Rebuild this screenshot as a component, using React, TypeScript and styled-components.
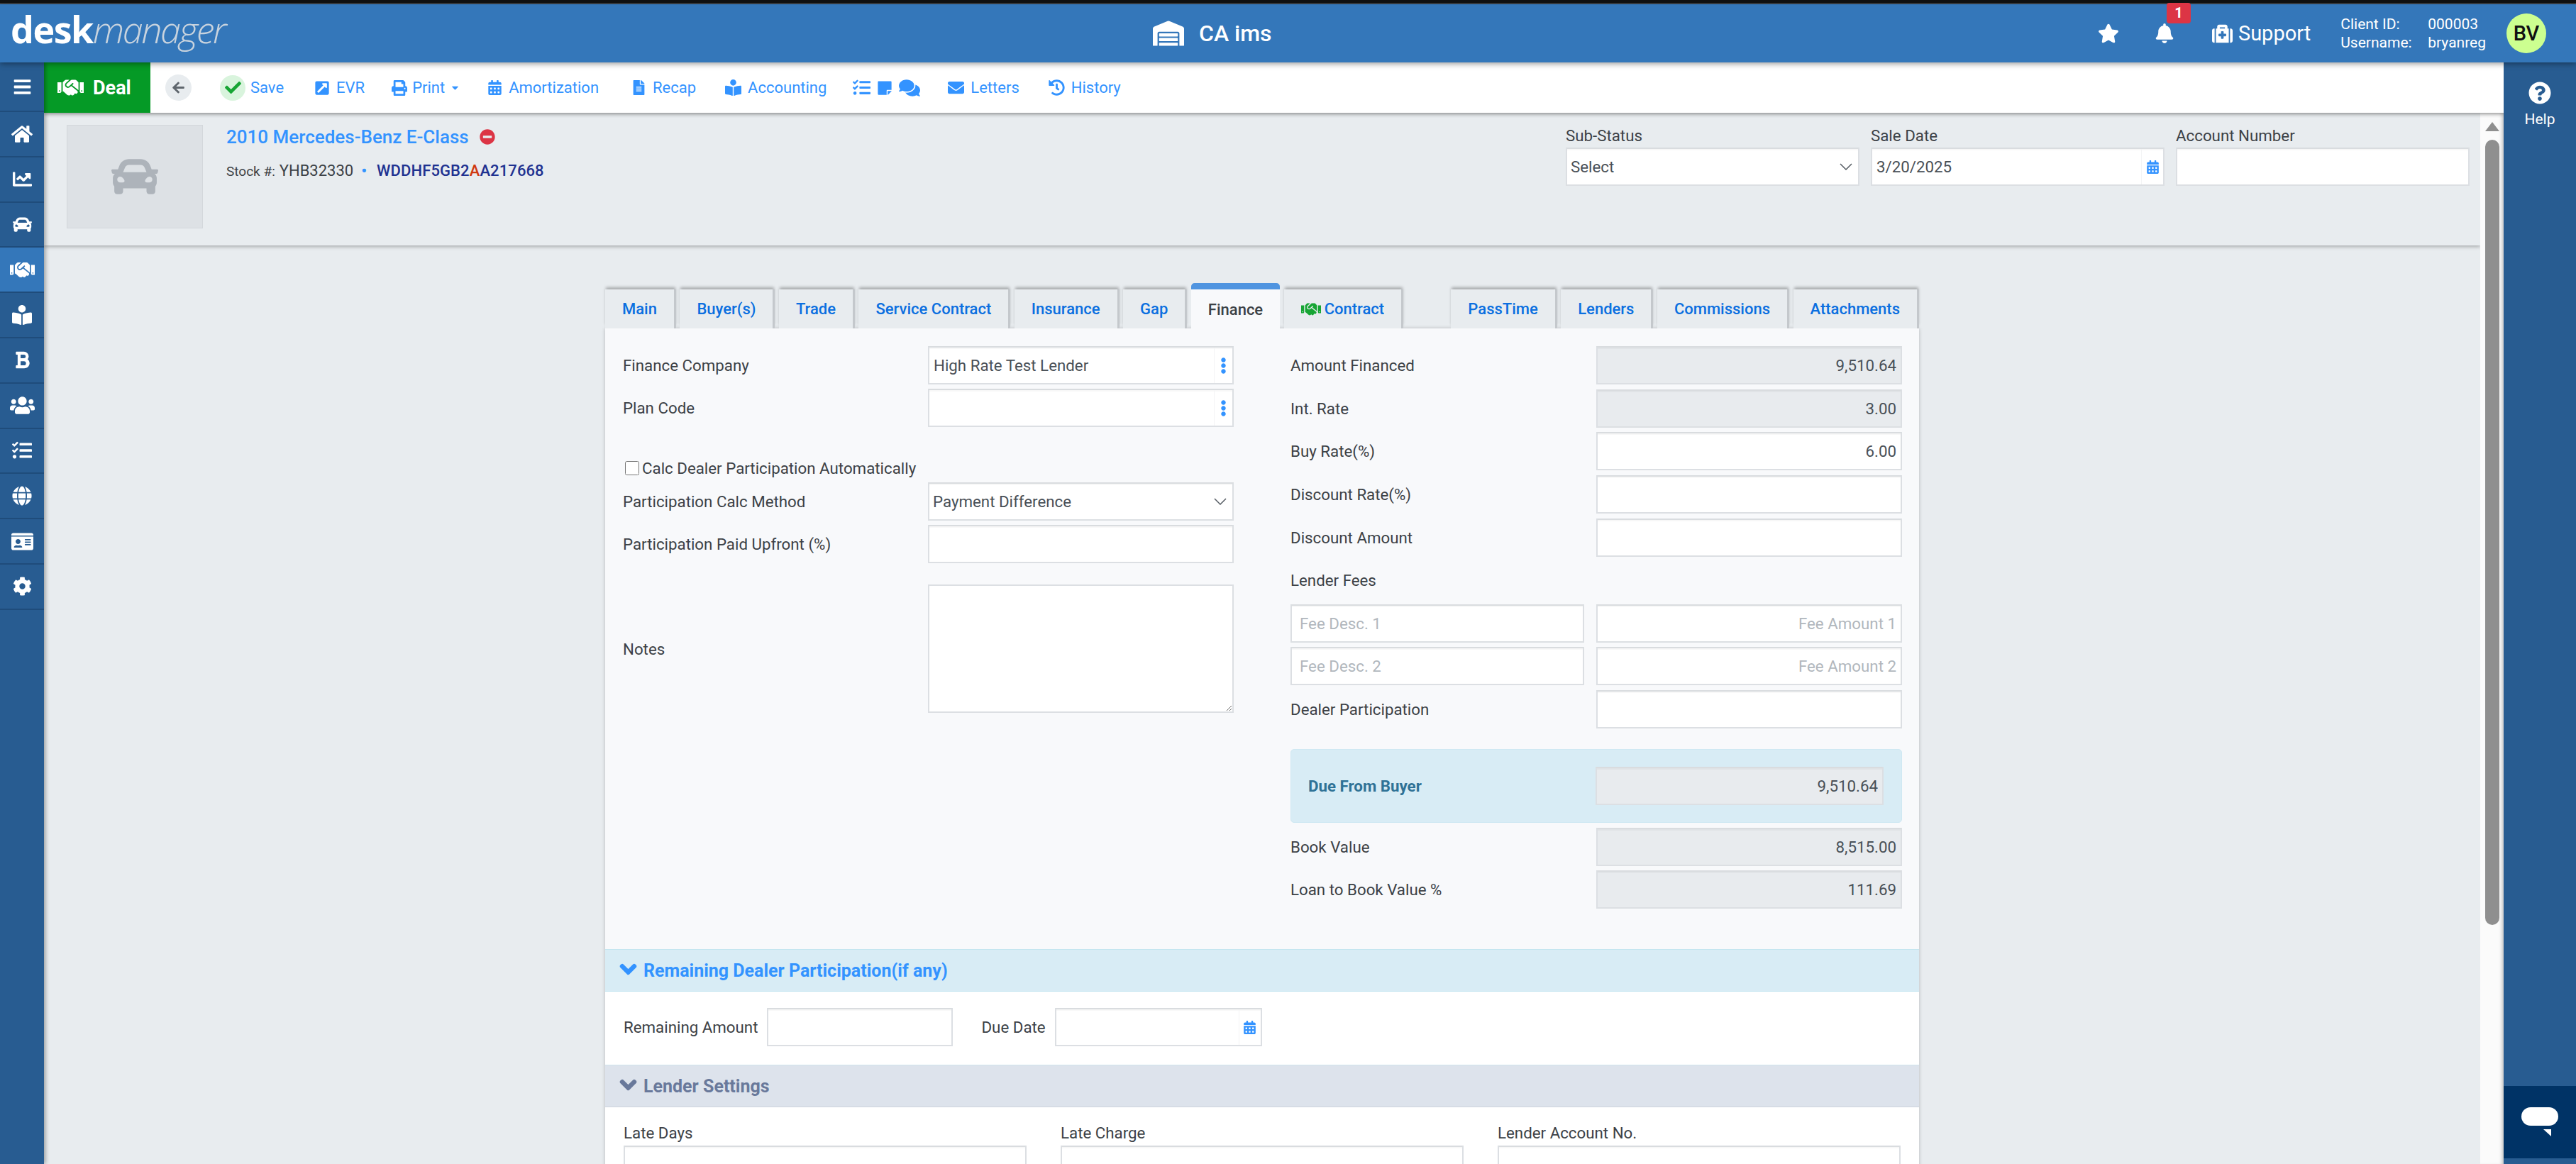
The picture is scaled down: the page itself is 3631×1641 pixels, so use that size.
import React from 'react';
import styled, { createGlobalStyle } from 'styled-components';
import {
	FaArrowLeft, FaBars, FaBell, FaBold, FaBookReader, FaCalendarAlt, FaCar, FaCaretDown, FaChartLine, FaCheck,
	FaChevronDown, FaCog, FaComments, FaEllipsisV, FaEnvelope, FaExternalLinkSquareAlt, FaFileAlt, FaGlobe,
	FaHandshake, FaHistory, FaHome, FaIdCard, FaMedkit, FaMinusCircle, FaPrint, FaQuestionCircle, FaStar,
	FaStickyNote, FaTasks, FaUsers, FaWarehouse,
} from 'react-icons/fa';

const GlobalStyle = createGlobalStyle`
	html, body {
		margin: 0;
		padding: 0;
		height: 100%;
		overflow: hidden;
		background: #e8ecef;
		font-family: Roboto, 'Liberation Sans', sans-serif;
		font-size: 22.3px;
		color: #3c4146;
	}
	* {
		box-sizing: border-box;
	}
`;

const Page = styled.div`
	width: 3631px;
	height: 1641px;
	display: flex;
	flex-direction: column;
	overflow: hidden;
`;

const TopEdge = styled.div`
	height: 6px;
	flex: none;
	background: #101112;
	border-bottom: 2px solid #3a3f45;
`;

const Header = styled.header`
	height: 82px;
	flex: none;
	position: relative;
	z-index: 3;
	background: #3477ba;
	color: #fff;
	display: flex;
	align-items: center;
	box-shadow: 0 2px 8px rgba(0, 0, 0, 0.4);
`;

const Logo = styled.div`
	width: 1625px;
	flex: none;
	padding-left: 15px;
	padding-bottom: 12px;
	font-family: 'Open Sans', sans-serif;
	font-size: 52px;
	line-height: 60px;
	letter-spacing: -1.5px;
	font-weight: 700;
	color: #fff;

	em {
		font-weight: 300;
		color: #c8d3de;
		letter-spacing: -2.4px;
	}
`;

const Dealer = styled.div`
	display: flex;
	align-items: center;
	gap: 21px;
	font-size: 32px;
	font-weight: 500;
`;

const HeaderRight = styled.div`
	flex: 1;
	display: flex;
	align-items: center;
	justify-content: flex-end;
	padding-right: 42px;
`;

const HeaderIcon = styled.div`
	display: flex;
	position: relative;
	margin-right: 50px;
`;

const Badge = styled.span`
	position: absolute;
	top: -29px;
	left: 17px;
	width: 34px;
	height: 29px;
	background: #dc3545;
	border-radius: 4px;
	font-size: 20px;
	font-weight: 700;
	text-align: center;
	line-height: 29px;
`;

const Support = styled.div`
	display: flex;
	align-items: center;
	gap: 8px;
	font-size: 29px;
	margin-right: 42px;
	margin-left: 3px;
`;

const ClientInfo = styled.div`
	display: grid;
	grid-template-columns: 123px auto;
	row-gap: 1px;
	font-size: 21px;
	line-height: 25px;
	margin-right: 29px;
`;

const Avatar = styled.div`
	width: 56px;
	height: 56px;
	border-radius: 50%;
	background: #ccff90;
	color: #111;
	font-size: 29px;
	font-weight: 500;
	display: flex;
	align-items: center;
	justify-content: center;
`;

const Body = styled.div`
	flex: 1;
	display: flex;
	min-height: 0;
`;

const Sidebar = styled.nav`
	width: 62px;
	flex: none;
	position: relative;
	z-index: 2;
	background: #285c91;
	box-shadow: 2px 0 6px rgba(0, 0, 0, 0.35);
`;

const NavItem = styled.div<{ $active?: boolean; $tall?: boolean }>`
	height: ${(p) => (p.$tall ? '70px' : '63.8px')};
	display: flex;
	align-items: center;
	justify-content: center;
	color: #fff;
	background: ${(p) => (p.$active ? '#3477ba' : 'transparent')};
	border-bottom: 2px solid #1f4c7b;
`;

const Main = styled.div`
	flex: 1;
	min-width: 0;
	display: flex;
	flex-direction: column;
`;

const Toolbar = styled.div`
	height: 71px;
	flex: none;
	position: relative;
	z-index: 1;
	background: #fff;
	display: flex;
	align-items: center;
	box-shadow: 0 2px 5px rgba(0, 0, 0, 0.4);
`;

const DealBadge = styled.div`
	width: 150px;
	height: 100%;
	background: #059a26;
	color: #fff;
	font-size: 27px;
	font-weight: 700;
	display: flex;
	align-items: center;
	gap: 13px;
	padding-left: 19px;
`;

const BackButton = styled.div`
	width: 37px;
	height: 37px;
	border-radius: 50%;
	margin-left: 21px;
	background: #e8ecef;
	color: #5f666d;
	display: flex;
	align-items: center;
	justify-content: center;
`;

const ToolItem = styled.div<{ $gap?: number; $left: number }>`
	display: flex;
	align-items: center;
	gap: ${(p) => p.$gap ?? 9}px;
	margin-left: ${(p) => p.$left}px;
	color: #3393ff;
	font-size: 22px;
	white-space: nowrap;
`;

const SaveCircle = styled.span`
	width: 36px;
	height: 36px;
	border-radius: 50%;
	background: #d9f4dd;
	color: #17a534;
	display: flex;
	align-items: center;
	justify-content: center;
`;

const Content = styled.div`
	flex: 1;
	min-height: 0;
	display: flex;
`;

const Scroller = styled.div`
	flex: 1;
	min-width: 0;
	overflow: hidden;
`;

const SubHeader = styled.section`
	height: 187px;
	display: flex;
	padding: 17px 15px 0 32px;
	box-shadow: 0 2px 5px rgba(0, 0, 0, 0.28);
`;

const PhotoBox = styled.div`
	width: 192px;
	height: 146px;
	background: #dde1e5;
	border: 1px solid #d3d7db;
	color: #adb3ba;
	display: flex;
	align-items: center;
	justify-content: center;
`;

const VehicleInfo = styled.div`
	margin-left: 33px;
	flex: 1;
`;

const VehicleTitle = styled.div`
	display: flex;
	align-items: center;
	gap: 15px;
	height: 34px;
	color: #3393ff;
	font-size: 26px;
	font-weight: 500;

	svg {
		color: #dc3545;
	}
`;

const StockLine = styled.div`
	display: flex;
	align-items: baseline;
	margin-top: 18px;
	font-size: 22px;
	color: #3c4146;

	small {
		font-size: 19px;
		margin-right: 6px;
	}
`;

const Dot = styled.span`
	color: #3393ff;
	margin: 0 14px 0 11px;
	font-weight: 700;
`;

const Vin = styled.span`
	font-weight: 500;
	letter-spacing: 0.1px;
	color: #1f3291;

	b {
		font-weight: 500;
		color: #d03a10;
	}
`;

const HeadFields = styled.div`
	display: flex;
	gap: 16px;
`;

const HeadField = styled.div`
	width: 414px;

	label {
		display: block;
		height: 32px;
		line-height: 30px;
	}
`;

const FieldShell = styled.div<{ $height?: number; $grey?: boolean; $width?: number }>`
	height: ${(p) => p.$height ?? 54}px;
	width: ${(p) => (p.$width ? `${p.$width}px` : '100%')};
	flex: none;
	display: flex;
	align-items: stretch;
	background: ${(p) => (p.$grey ? '#e8ebee' : '#fff')};
	border: 2px solid #dcdfe3;
	border-top-color: #d9dcdf;
	box-shadow: inset 0 2px 1px rgba(0, 0, 0, 0.03);
	color: #495057;
`;

const TextInput = styled.input<{ $right?: boolean; $pad?: number }>`
	flex: 1;
	min-width: 0;
	border: 0;
	outline: 0;
	background: transparent;
	font: inherit;
	color: #495057;
	padding: 0 ${(p) => (p.$right ? 6 : p.$pad ?? 6)}px;
	text-align: ${(p) => (p.$right ? 'right' : 'left')};

	&::placeholder {
		color: #b1b7bd;
		opacity: 1;
	}
`;

const SelectBox = styled.select`
	flex: 1;
	min-width: 0;
	border: 0;
	outline: 0;
	background: transparent;
	appearance: none;
	font: inherit;
	color: #495057;
	padding: 0 5px;
`;

const Chevron = styled.svg`
	width: 18px;
	height: 10px;
	align-self: center;
	margin-right: 8px;
	fill: none;
	stroke: #555c63;
	stroke-width: 1.5;
`;

const Addon = styled.span<{ $narrow?: boolean }>`
	width: ${(p) => (p.$narrow ? 26 : 31)}px;
	flex: none;
	display: flex;
	align-items: center;
	justify-content: center;
	color: #3393ff;
	border-left: 1px solid #f3f4f5;
`;

const PanelWrap = styled.div`
	width: 1852px;
	margin: 53px auto 0;
`;

const TabsBar = styled.div`
	height: 64px;
	display: flex;
	align-items: flex-end;
	gap: 5.5px;
`;

const Tab = styled.div<{ $active?: boolean; $pushed?: boolean }>`
	height: ${(p) => (p.$active ? 64 : 55)}px;
	padding: ${(p) => (p.$active ? '1px' : '0')} 24px 0;
	margin-left: ${(p) => (p.$pushed ? 'auto' : '0')};
	display: flex;
	align-items: center;
	gap: 5px;
	font-weight: 500;
	font-size: 22px;
	white-space: nowrap;
	color: ${(p) => (p.$active ? '#3c4146' : '#0b6fe0')};
	background: ${(p) => (p.$active ? '#f8f9fb' : '#e8ecef')};
	border-top: ${(p) => (p.$active ? '9px solid #4f94e0' : '0')};
	border-right: ${(p) => (p.$active ? '0' : '3px solid #c4c8cc')};
	border-radius: ${(p) => (p.$active ? '5px 5px 0 0' : '0')};
	box-shadow: ${(p) => (p.$active ? 'none' : '0 -4px 4px -1px rgba(0, 0, 0, 0.28)')};

	svg {
		color: #17a534;
	}
`;

const Panel = styled.div`
	background: #fff;
	box-shadow: 0 0 5px rgba(0, 0, 0, 0.22);
`;

const FinanceBody = styled.div`
	height: 875px;
	background: #f8f9fb;
	padding: 25px 24px 0 25px;
	display: grid;
	grid-template-columns: 861px 862px;
	column-gap: 80px;
`;

const Column = styled.div`
	display: flex;
	flex-direction: column;
`;

const Row = styled.div<{ $below?: number }>`
	display: flex;
	align-items: center;
	justify-content: space-between;
	margin-bottom: ${(p) => p.$below ?? 6.7}px;
	min-height: 54px;
`;

const RowField = styled.div`
	width: 431px;
	flex: none;
`;

const CheckRow = styled.label`
	display: flex;
	align-items: center;
	gap: 4px;
	height: 38px;
	margin-bottom: 1px;

	input {
		width: 20px;
		height: 20px;
		margin: 0 0 0 3px;
	}
`;

const NotesArea = styled.textarea`
	width: 431px;
	height: 181px;
	flex: none;
	background: #fff;
	border: 2px solid #dcdfe3;
	outline: 0;
	resize: both;
	font: inherit;
`;

const PlainLabel = styled.div`
	height: 26px;
	line-height: 26px;
	margin: 20px 0 21px;
`;

const FeeRow = styled.div`
	display: flex;
	justify-content: space-between;
	margin-bottom: 6.5px;
`;

const DueBox = styled.div`
	height: 104px;
	margin: 29px 0 7px;
	padding-left: 24px;
	padding-right: 25px;
	background: #d8ecf5;
	border: 1px solid #cfe8f3;
	border-radius: 5px;
	display: flex;
	align-items: center;
	justify-content: space-between;
	color: #2f7296;
	font-weight: 700;

	> div {
		width: 406px;
		margin-right: 0;
		font-weight: 400;
	}
`;

const SectionBar = styled.div<{ $muted?: boolean }>`
	height: 60px;
	display: flex;
	align-items: center;
	gap: 9px;
	padding-left: 20px;
	font-size: 25px;
	font-weight: 700;
	color: ${(p) => (p.$muted ? '#69799b' : '#3393ff')};
	background: ${(p) => (p.$muted ? '#dde3ec' : '#d8ecf5')};
	border-top: 1px solid ${(p) => (p.$muted ? '#cfe3ec' : '#c3e5f0')};
	border-bottom: 1px solid ${(p) => (p.$muted ? '#ccd3dd' : '#c3e5f0')};

	svg {
		stroke: currentColor;
		stroke-width: 50;
		margin-top: -4px;
	}
`;

const RemainingRow = styled.div`
	height: 103px;
	display: flex;
	align-items: center;
	padding: 0 0 3px 26px;
	background: #fff;
`;

const InlineLabel = styled.span<{ $left?: number }>`
	margin-left: ${(p) => p.$left ?? 0}px;
	margin-right: 13px;
`;

const LenderGrid = styled.div`
	display: grid;
	grid-template-columns: repeat(3, 568px);
	column-gap: 48px;
	padding: 22px 25px 0 26px;
	background: #fff;

	label {
		display: block;
		height: 32px;
		line-height: 28px;
	}
`;

const ScrollTrack = styled.div`
	width: 33px;
	flex: none;
	background: #fbfbfb;
	display: flex;
	flex-direction: column;
	align-items: center;
	padding-top: 13px;
	padding-left: 1px;
	box-shadow: inset -5px 0 5px -3px rgba(0, 0, 0, 0.25);
`;

const ScrollArrow = styled.div`
	width: 0;
	height: 0;
	border-left: 10px solid transparent;
	border-right: 10px solid transparent;
	border-bottom: 13px solid #8f8f8f;
`;

const ScrollThumb = styled.div`
	width: 20px;
	height: 1107px;
	margin-top: 12px;
	border-radius: 10px;
	background: #8f8f8f;
`;

const HelpBar = styled.aside`
	width: 102px;
	flex: none;
	background: #285c91;
	display: flex;
	flex-direction: column;
	align-items: center;
	color: #fff;
	position: relative;
	z-index: 2;
`;

const HelpItem = styled.div`
	margin-top: 27px;
	display: flex;
	flex-direction: column;
	align-items: center;
	gap: 8px;
	font-size: 21px;
	line-height: 26px;
	flex: 1;
`;

const ChatButton = styled.div`
	width: 100%;
	height: 102px;
	margin-bottom: 8px;
	background: #003366;
	display: flex;
	align-items: center;
	justify-content: center;
`;

const tabs = ['Main', 'Buyer(s)', 'Trade', 'Service Contract', 'Insurance', 'Gap'];
const rightTabs = ['PassTime', 'Lenders', 'Commissions', 'Attachments'];

const Calendar = () => (
	<Addon>
		<FaCalendarAlt size={19} />
	</Addon>
);

const Field = (props: { value?: string; right?: boolean; grey?: boolean; placeholder?: string; pad?: number; width?: number }) => (
	<FieldShell $grey={props.grey} $width={props.width}>
		<TextInput readOnly value={props.value} placeholder={props.placeholder} $right={props.right} $pad={props.pad} />
	</FieldShell>
);

const ChevronIcon = () => (
	<Chevron viewBox='0 0 18 10'>
		<path d='M1 1l8 8 8-8' />
	</Chevron>
);

const App = () => {
	return (
		<Page>
			<GlobalStyle />
			<TopEdge />
			<Header>
				<Logo>
					desk<em>manager</em>
				</Logo>
				<Dealer>
					<FaWarehouse size={44} />
					CA ims
				</Dealer>
				<HeaderRight>
					<HeaderIcon>
						<FaStar size={30} />
					</HeaderIcon>
					<HeaderIcon>
						<FaBell size={28} />
						<Badge>1</Badge>
					</HeaderIcon>
					<Support>
						<FaMedkit size={29} />
						Support
					</Support>
					<ClientInfo>
						<span>Client ID:</span>
						<span>000003</span>
						<span>Username:</span>
						<span>bryanreg</span>
					</ClientInfo>
					<Avatar>BV</Avatar>
				</HeaderRight>
			</Header>
			<Body>
				<Sidebar>
					<NavItem $tall>
						<FaBars size={27} />
					</NavItem>
					<NavItem>
						<FaHome size={30} />
					</NavItem>
					<NavItem>
						<FaChartLine size={27} />
					</NavItem>
					<NavItem>
						<FaCar size={27} />
					</NavItem>
					<NavItem $active>
						<FaHandshake size={35} />
					</NavItem>
					<NavItem>
						<FaBookReader size={28} />
					</NavItem>
					<NavItem>
						<FaBold size={27} />
					</NavItem>
					<NavItem>
						<FaUsers size={35} />
					</NavItem>
					<NavItem>
						<FaTasks size={28} />
					</NavItem>
					<NavItem>
						<FaGlobe size={28} />
					</NavItem>
					<NavItem>
						<FaIdCard size={31} />
					</NavItem>
					<NavItem>
						<FaCog size={27} />
					</NavItem>
				</Sidebar>
				<Main>
					<Toolbar>
						<DealBadge>
							<FaHandshake size={37} />
							Deal
						</DealBadge>
						<BackButton>
							<FaArrowLeft size={19} />
						</BackButton>
						<ToolItem $left={40} $gap={7}>
							<SaveCircle>
								<FaCheck size={23} />
							</SaveCircle>
							Save
						</ToolItem>
						<ToolItem $left={43}>
							<FaExternalLinkSquareAlt size={22} />
							EVR
						</ToolItem>
						<ToolItem $left={38} $gap={7}>
							<FaPrint size={22} />
							Print
							<FaCaretDown size={15} />
						</ToolItem>
						<ToolItem $left={38}>
							<FaCalendarAlt size={21} />
							Amortization
						</ToolItem>
						<ToolItem $left={46}>
							<FaFileAlt size={21} />
							Recap
						</ToolItem>
						<ToolItem $left={41}>
							<FaBookReader size={23} />
							Accounting
						</ToolItem>
						<ToolItem $left={37}>
							<FaTasks size={25} />
							<FaStickyNote size={22} />
							<FaComments size={30} />
						</ToolItem>
						<ToolItem $left={39}>
							<FaEnvelope size={23} />
							Letters
						</ToolItem>
						<ToolItem $left={41}>
							<FaHistory size={23} />
							History
						</ToolItem>
					</Toolbar>
					<Content>
						<Scroller>
							<SubHeader>
								<PhotoBox>
									<FaCar size={66} />
								</PhotoBox>
								<VehicleInfo>
									<VehicleTitle>
										2010 Mercedes-Benz E-Class
										<FaMinusCircle size={22} />
									</VehicleTitle>
									<StockLine>
										<small>Stock #:</small>
										YHB32330
										<Dot>•</Dot>
										<Vin>
											WDDHF5GB2<b>A</b>A217668
										</Vin>
									</StockLine>
								</VehicleInfo>
								<HeadFields>
									<HeadField>
										<label>Sub-Status</label>
										<FieldShell>
											<SelectBox defaultValue='Select'>
												<option>Select</option>
											</SelectBox>
											<ChevronIcon />
										</FieldShell>
									</HeadField>
									<HeadField>
										<label>Sale Date</label>
										<FieldShell>
											<TextInput readOnly value='3/20/2025' />
											<Calendar />
										</FieldShell>
									</HeadField>
									<HeadField>
										<label>Account Number</label>
										<Field />
									</HeadField>
								</HeadFields>
							</SubHeader>
							<PanelWrap>
								<TabsBar>
									{tabs.map((tab) => (
										<Tab key={tab}>{tab}</Tab>
									))}
									<Tab $active>Finance</Tab>
									<Tab>
										<FaHandshake size={28} />
										Contract
									</Tab>
									{rightTabs.map((tab, i) => (
										<Tab key={tab} $pushed={i === 0}>
											{tab}
										</Tab>
									))}
								</TabsBar>
								<Panel>
									<FinanceBody>
										<Column>
											<Row $below={6}>
												Finance Company
												<RowField>
													<FieldShell>
														<TextInput readOnly value='High Rate Test Lender' />
														<Addon $narrow>
															<FaEllipsisV size={23} />
														</Addon>
													</FieldShell>
												</RowField>
											</Row>
											<Row $below={39}>
												Plan Code
												<RowField>
													<FieldShell>
														<TextInput readOnly />
														<Addon $narrow>
															<FaEllipsisV size={23} />
														</Addon>
													</FieldShell>
												</RowField>
											</Row>
											<CheckRow>
												<input type='checkbox' />
												Calc Dealer Participation Automatically
											</CheckRow>
											<Row $below={6}>
												Participation Calc Method
												<RowField>
													<FieldShell>
														<SelectBox defaultValue='Payment Difference'>
															<option>Payment Difference</option>
														</SelectBox>
														<ChevronIcon />
													</FieldShell>
												</RowField>
											</Row>
											<Row $below={30}>
												Participation Paid Upfront (%)
												<RowField>
													<Field />
												</RowField>
											</Row>
											<Row>
												Notes
												<NotesArea />
											</Row>
										</Column>
										<Column>
											<Row>
												Amount Financed
												<RowField>
													<Field grey right value='9,510.64' />
												</RowField>
											</Row>
											<Row>
												Int. Rate
												<RowField>
													<Field grey right value='3.00' />
												</RowField>
											</Row>
											<Row>
												Buy Rate(%)
												<RowField>
													<Field right value='6.00' />
												</RowField>
											</Row>
											<Row>
												Discount Rate(%)
												<RowField>
													<Field />
												</RowField>
											</Row>
											<Row $below={0}>
												Discount Amount
												<RowField>
													<Field />
												</RowField>
											</Row>
											<PlainLabel>Lender Fees</PlainLabel>
											<FeeRow>
												<Field width={414} placeholder='Fee Desc. 1' pad={11} />
												<RowField>
													<Field right placeholder='Fee Amount 1' />
												</RowField>
											</FeeRow>
											<FeeRow>
												<Field width={414} placeholder='Fee Desc. 2' pad={11} />
												<RowField>
													<Field right placeholder='Fee Amount 2' />
												</RowField>
											</FeeRow>
											<Row $below={0}>
												Dealer Participation
												<RowField>
													<Field />
												</RowField>
											</Row>
											<DueBox>
												Due From Buyer
												<div>
													<Field grey right value='9,510.64' />
												</div>
											</DueBox>
											<Row>
												Book Value
												<RowField>
													<Field grey right value='8,515.00' />
												</RowField>
											</Row>
											<Row>
												Loan to Book Value %
												<RowField>
													<Field grey right value='111.69' />
												</RowField>
											</Row>
										</Column>
									</FinanceBody>
									<SectionBar>
										<FaChevronDown size={25} />
										Remaining Dealer Participation(if any)
									</SectionBar>
									<RemainingRow>
										<InlineLabel>Remaining Amount</InlineLabel>
										<Field width={262} />
										<InlineLabel $left={40}>Due Date</InlineLabel>
										<FieldShell $width={292}>
											<TextInput readOnly />
											<Calendar />
										</FieldShell>
									</RemainingRow>
									<SectionBar $muted>
										<FaChevronDown size={25} />
										Lender Settings
									</SectionBar>
									<LenderGrid>
										<div>
											<label>Late Days</label>
											<Field />
										</div>
										<div>
											<label>Late Charge</label>
											<Field />
										</div>
										<div>
											<label>Lender Account No.</label>
											<Field />
										</div>
									</LenderGrid>
								</Panel>
							</PanelWrap>
						</Scroller>
						<ScrollTrack>
							<ScrollArrow />
							<ScrollThumb />
						</ScrollTrack>
					</Content>
				</Main>
				<HelpBar>
					<HelpItem>
						<FaQuestionCircle size={32} />
						Help
					</HelpItem>
					<ChatButton>
						<svg width='54' height='42' viewBox='0 0 54 42'>
							<rect x='1' y='0' width='52' height='26' rx='13' fill='#fff' />
							<path d='M32 31h11v10z' fill='#fff' />
						</svg>
					</ChatButton>
				</HelpBar>
			</Body>
		</Page>
	);
};

export default App;
